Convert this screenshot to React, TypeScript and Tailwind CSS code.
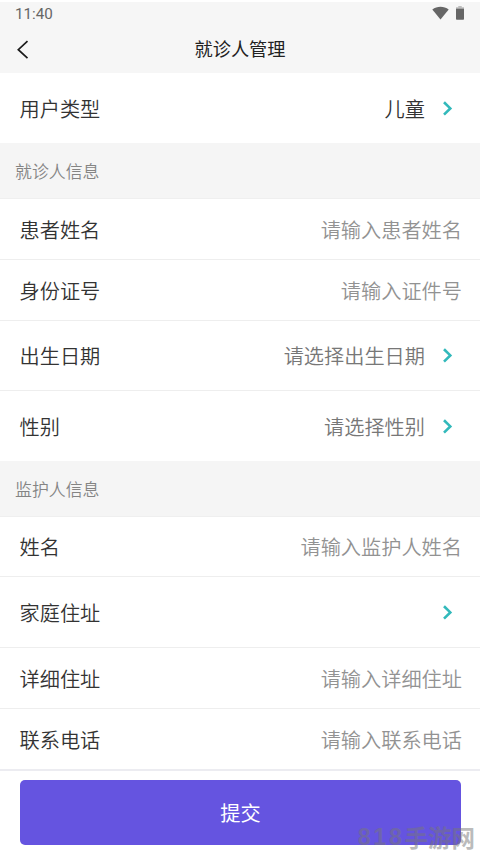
import { useState } from "react";

interface Row {
  label: string;
  height: string;
  placeholder?: string;
  value?: string;
  picker?: boolean;
}

const TYPE_ROWS: Row[] = [
  { label: '用户类型', height: 'h-[70px]', value: '儿童', picker: true },
];

const PATIENT_ROWS: Row[] = [
  { label: '患者姓名', height: 'h-[61px]', placeholder: '请输入患者姓名' },
  { label: '身份证号', height: 'h-[61px]', placeholder: '请输入证件号' },
  { label: '出生日期', height: 'h-[70px]', placeholder: '请选择出生日期', picker: true },
  { label: '性别', height: 'h-[70px]', placeholder: '请选择性别', picker: true },
];

const GUARDIAN_ROWS: Row[] = [
  { label: '姓名', height: 'h-[60px]', placeholder: '请输入监护人姓名' },
  { label: '家庭住址', height: 'h-[71px]', picker: true },
  { label: '详细住址', height: 'h-[61px]', placeholder: '请输入详细住址' },
  { label: '联系电话', height: 'h-[60px]', placeholder: '请输入联系电话' },
];

function StatusBar() {
  return (
    <div className="flex h-[22px] items-center justify-between pl-[15px] pr-4 text-[#666]">
      <span className="pt-[3px] font-['Roboto',sans-serif] text-[15.2px] font-normal leading-none">11:40</span>
      <div className="flex items-center gap-[7px]">
        <svg width="17" height="14" viewBox="0 0 17 14" fill="currentColor">
          <path d="M8.5 13.5 0.3 3.4C5-0.2 12-0.2 16.7 3.4Z" />
        </svg>
        <svg width="8" height="14" viewBox="0 0 8 14" fill="currentColor">
          <path d="M2.3 0h3.4v1.2H8V3H0V1.2h2.3Z" opacity="0.4" />
          <path d="M0 2.8h8V13a.8.8 0 0 1-.8.8H.8A.8.8 0 0 1 0 13Z" />
        </svg>
      </div>
    </div>
  );
}

function ChevronIcon() {
  return (
    <svg width="10" height="16" viewBox="0 0 10 16" fill="none" stroke="#32b9bb" strokeWidth="2.6">
      <path d="M1 2.2 7.3 8.4 1 14.6" />
    </svg>
  );
}

function SectionTitle({ title }: { title: string }) {
  return (
    <div className="flex h-14 items-center border-b border-[#efefef] bg-[#f5f5f5] pl-[15px] pt-[1px] text-[16.9px] text-[#848484]">{title}</div>
  );
}

function FormRow({ row, last }: { row: Row; last: boolean }) {
  const [text, setText] = useState('');

  return (
    <div className={`flex items-center justify-between pl-[19.5px] ${row.height} ${row.picker ? 'pr-[27px]' : 'pr-[18px]'} ${last ? '' : 'border-b border-[#eee]'}`}>
      <span className="shrink-0 pt-[2px] text-[#333]">{row.label}</span>
      {row.picker ? (
        <button className="flex items-center gap-[18px]">
          <span className={`pt-[2px] ${row.value ? 'text-[#333]' : 'text-[#777]'}`}>{row.value ?? row.placeholder}</span>
          <ChevronIcon />
        </button>
      ) : (
        <input
          value={text}
          onChange={(e) => setText(e.target.value)}
          placeholder={row.placeholder}
          className="w-60 bg-transparent text-right text-[#333] outline-none placeholder:text-[#929292]"
        />
      )}
    </div>
  );
}

function RowGroup({ rows }: { rows: Row[] }) {
  return (
    <div className="bg-white">
      {rows.map((row, i) => (
        <FormRow key={row.label} row={row} last={i === rows.length - 1} />
      ))}
    </div>
  );
}

export default function App() {
  return (
    <div className="relative flex h-[854px] w-[480px] flex-col overflow-hidden bg-white font-['Noto_Sans_CJK_SC',sans-serif] text-[20.2px] font-[350] leading-none">
      {/* Header */}
      <header className="mt-[2px] h-[71px] shrink-0 bg-[#f6f6f6]">
        <StatusBar />
        <div className="grid h-[49px] grid-cols-[40px_1fr_40px] items-center">
          <button className="pl-[17px] pt-[2px]" aria-label="返回">
            <svg width="12" height="20" viewBox="0 0 12 20" fill="none" stroke="#1a1a1a" strokeWidth="1.7">
              <path d="M10.5 1.2 1.3 9.7l9.2 8.5" />
            </svg>
          </button>
          <h1 className="text-center text-[18.2px] font-normal text-[#222]">就诊人管理</h1>
        </div>
      </header>

      <RowGroup rows={TYPE_ROWS} />
      <SectionTitle title="就诊人信息" />
      <RowGroup rows={PATIENT_ROWS} />
      <SectionTitle title="监护人信息" />
      <RowGroup rows={GUARDIAN_ROWS} />

      {/* Submit */}
      <div className="grow border-t-2 border-[#ececf1] px-5 pt-[9px]">
        <button className="h-[65px] w-[441px] rounded-[5px] bg-[#6554e0] pt-[2px] font-normal text-white">提交</button>
      </div>

      {/* Watermark */}
      <div className="absolute bottom-[3px] right-[5px] flex items-center text-[23.5px] font-bold leading-[28px] text-[#777]/50">
        <span className="font-['Liberation_Sans',sans-serif] tracking-[2.5px]">818</span>
        <span>手游网</span>
      </div>
    </div>
  );
}
